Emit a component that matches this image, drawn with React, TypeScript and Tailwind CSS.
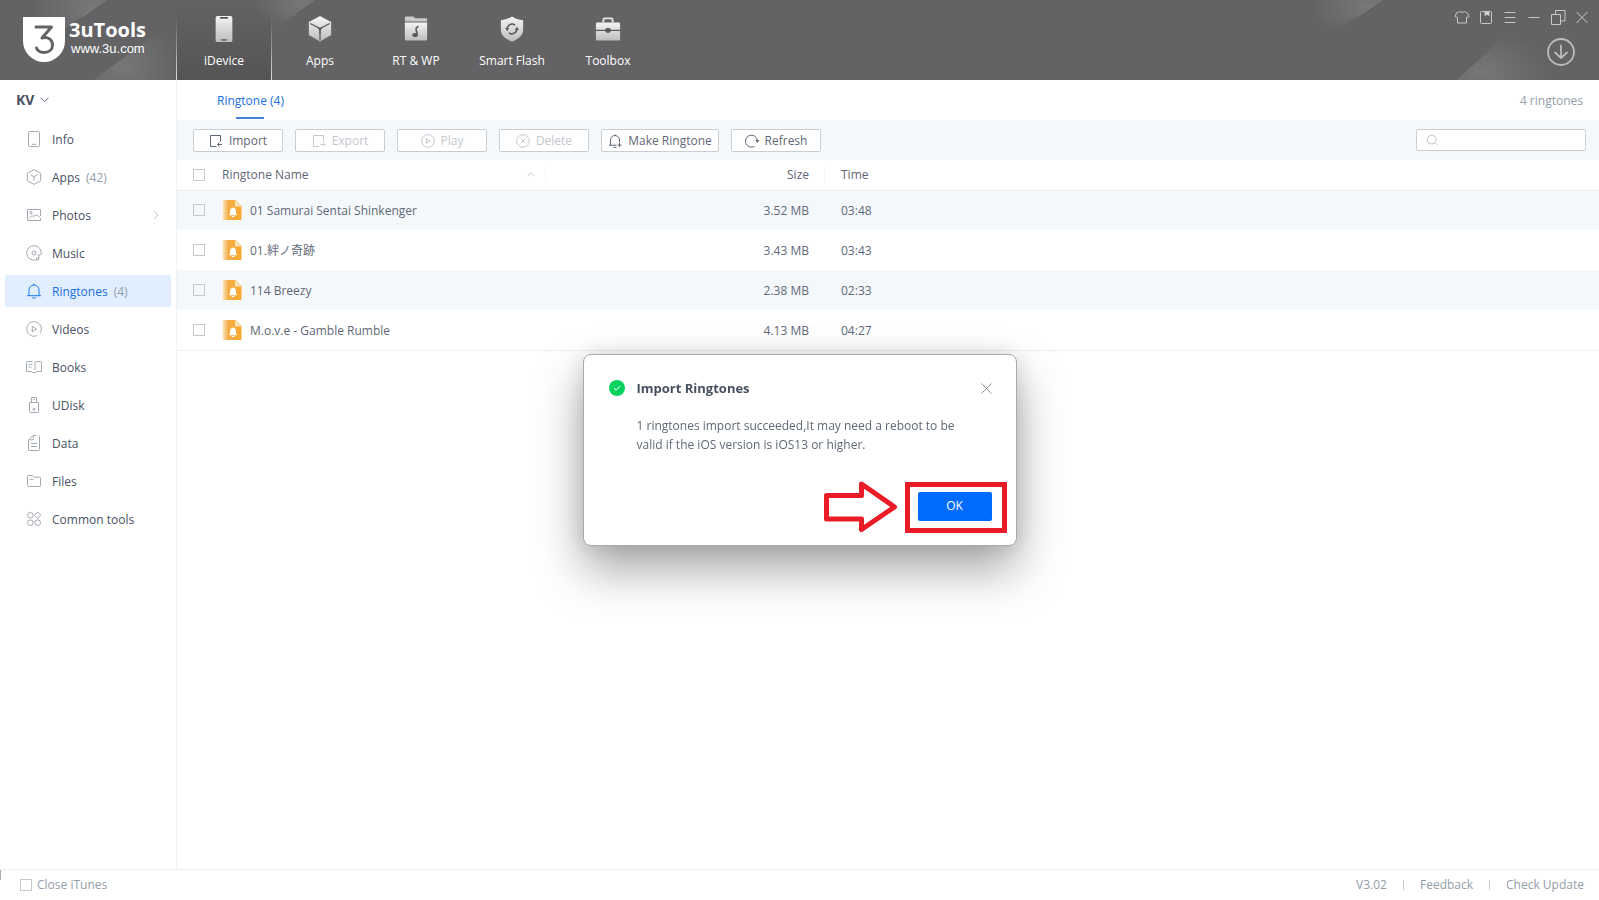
import { useState, type ReactNode } from 'react';
import clsx from 'clsx';

type IconProps = { className?: string };

const navTabs = [
  { label: 'iDevice', icon: DeviceIcon },
  { label: 'Apps', icon: CubeIcon },
  { label: 'RT & WP', icon: MusicFolderIcon },
  { label: 'Smart Flash', icon: ShieldIcon },
  { label: 'Toolbox', icon: ToolboxIcon },
];

const sideItems = [
  { label: 'Info', icon: 'info' },
  { label: 'Apps', icon: 'apps', count: 42 },
  { label: 'Photos', icon: 'photos', more: true },
  { label: 'Music', icon: 'music' },
  { label: 'Ringtones', icon: 'bell', count: 4 },
  { label: 'Videos', icon: 'videos' },
  { label: 'Books', icon: 'books' },
  { label: 'UDisk', icon: 'udisk' },
  { label: 'Data', icon: 'data' },
  { label: 'Files', icon: 'files' },
  { label: 'Common tools', icon: 'tools' },
];

const ringtones = [
  { name: '01 Samurai Sentai Shinkenger', size: '3.52 MB', time: '03:48' },
  { name: '01.絆ノ奇跡', size: '3.43 MB', time: '03:43' },
  { name: '114 Breezy', size: '2.38 MB', time: '02:33' },
  { name: 'M.o.v.e - Gamble Rumble', size: '4.13 MB', time: '04:27' },
];

// 16x16 line icons for the sidebar
const sideIcons: Record<string, ReactNode> = {
  info: (
    <>
      <rect x="2.5" y=".5" width="11" height="15" rx="1.2" />
      <path d="M6 13.3h4" />
    </>
  ),
  apps: (
    <>
      <path d="M8 .6l6.7 3.7v7.4L8 15.4l-6.7-3.7V4.300z" />
      <path d="M4.500 5.800L8 7.700l3.500-1.900M8 7.700v4" />
    </>
  ),
  photos: (
    <>
      <path d="M14.500 9V2.500h-13v11h13V11" />
      <circle cx="5" cy="5.700" r="1.200" />
      <path d="M3 11.500c2-3 4-3 5.500-1.500M8 8.500c2-1.200 4-.5 5.500 2" />
    </>
  ),
  music: (
    <>
      <path d="M9.800 15A7.300 7.300 0 1 1 15 10" />
      <circle cx="8" cy="8" r="2" />
      <circle cx="11.500" cy="14" r="1.300" />
      <path d="M12.800 14V9.500l1.500 1.500" />
    </>
  ),
  bell: (
    <>
      <path d="M3 12.500V7a5 5 0 0 1 10 0v5.500M1 12.700h14M6.300 14.900h3.400M8 2V.6" />
    </>
  ),
  videos: (
    <>
      <path d="M11.500 14.400A7.300 7.300 0 1 1 14 12.200" />
      <path d="M6.300 5.300v5.400L10.500 8z" />
    </>
  ),
  books: (
    <>
      <path d="M6.500 2.500h-5a1 1 0 0 0-1 1v9h5l1 1h3l1-1h5v-9a1 1 0 0 0-1-1h-4a1.500 1.500 0 0 0-1.500 1.500v7M2.500 5.300h4M2.500 8h3" />
    </>
  ),
  udisk: (
    <>
      <path d="M5.500 5V.5h5V5M3.500 5.500h9v9a1 1 0 0 1-1 1h-7a1 1 0 0 1-1-1zM7.200 2.500h1.600" />
      <circle cx="8" cy="12.300" r="1" />
    </>
  ),
  data: (
    <>
      <path d="M10 .5H7L2.500 5v9.500a1 1 0 0 0 1 1h9a1 1 0 0 0 1-1v-13a1 1 0 0 0-1-1M7.300 1v3.800H3M5 8.500h6M5 11.500h6" />
    </>
  ),
  files: (
    <>
      <path d="M14.500 8v4.500a1 1 0 0 1-1 1h-11a1 1 0 0 1-1-1v-9a1 1 0 0 1 1-1h4l1.500 1.700h5.500a1 1 0 0 1 1 1V8M3.500 6.300h4" />
    </>
  ),
  tools: (
    <>
      <circle cx="4.300" cy="4.300" r="2.800" />
      <path d="M11.700 1l3.200 3.300-3.200 3.200-3.200-3.200z" />
      <circle cx="4.300" cy="11.700" r="2.800" />
      <circle cx="11.700" cy="11.700" r="2.800" />
    </>
  ),
};

const toolIcons: Record<string, ReactNode> = {
  import: <path d="M7.500 12.500h-6v-11h10v6M13 10.500H8.500m2-2l-2 2 2 2" />,
  export: <path d="M7.500 12.500h-6v-11h10v6M8.500 10.500H13m-2-2l2 2-2 2" />,
  play: (
    <>
      <circle cx="7" cy="7" r="6.300" />
      <path d="M5.500 4.800v4.400L9 7z" />
    </>
  ),
  delete: (
    <>
      <circle cx="7" cy="7" r="6.300" />
      <path d="M4.800 4.800l4.400 4.400m0-4.400L4.800 9.200" />
    </>
  ),
  ring: <path d="M2.500 11V6a4.500 4.500 0 0 1 9 0v2.500M1 11.200h7.500M5.500 13.300h3M7 1.500V.3M9.500 11h4m-2-2v4" />,
  refresh: (
    <>
      <path d="M9.500 12.300A6 6 0 1 1 12.300 6" />
      <path d="M10.300 6h4l-2 3z" fill="currentColor" stroke="none" />
    </>
  ),
};

export default function App() {
  const [dialogOpen, setDialogOpen] = useState(true);

  return (
    <div className="flex h-screen flex-col bg-white font-['Open_Sans','Noto_Sans_CJK_JP',sans-serif] text-xs text-[#5f6878]">
      <Header />
      <div className="flex min-h-0 flex-1">
        <Sidebar />
        <main className="min-w-0 flex-1">
          <div className="flex h-10 items-stretch justify-between pr-4 pl-10">
            <button className="relative pt-0.5 text-[#1b6fe0]">
              Ringtone (4)
              <span className="absolute bottom-px left-1/2 h-0.5 w-7 -translate-x-1/2 bg-[#3f82cf]" />
            </button>
            <span className="self-center pt-0.5 text-[#939daa]">4 ringtones</span>
          </div>
          <Toolbar />
          <RingtoneTable />
        </main>
      </div>
      <StatusBar />
      {dialogOpen && <ImportDialog onClose={() => setDialogOpen(false)} />}
    </div>
  );
}

function Header() {
  return (
    <header className="relative flex h-20 shrink-0 bg-[#636365] text-white">
      {/* diagonal light streaks */}
      <svg className="absolute top-0 left-0" width="400" height="80" aria-hidden="true">
        <defs>
          <radialGradient id="glow">
            <stop offset="0" stopColor="#fff" stopOpacity=".13" />
            <stop offset="1" stopColor="#fff" stopOpacity="0" />
          </radialGradient>
          <clipPath id="cutA">
            <path d="M0 0H106L0 75z" />
          </clipPath>
          <clipPath id="cutB">
            <path d="M93 80L203 0V80z" />
          </clipPath>
          <clipPath id="cutC">
            <path d="M180 0H314L204 80H180z" />
          </clipPath>
        </defs>
        <ellipse cx="92" cy="8" rx="62" ry="40" fill="url(#glow)" clipPath="url(#cutA)" />
        <path d="M106 0L82 17" stroke="#858587" strokeWidth=".8" />
        <ellipse cx="122" cy="66" rx="56" ry="46" fill="url(#glow)" clipPath="url(#cutB)" />
        <ellipse cx="302" cy="4" rx="50" ry="26" fill="url(#glow)" clipPath="url(#cutC)" />
        <path d="M314 0L292 16" stroke="#7c7c7e" strokeWidth=".8" />
      </svg>
      <svg className="absolute top-0 right-0" width="300" height="80" aria-hidden="true">
        <defs>
          <clipPath id="cutD">
            <path d="M0 0H83L0 56z" />
          </clipPath>
          <clipPath id="cutE">
            <path d="M158 80L240 4H300V80z" />
          </clipPath>
        </defs>
        <ellipse cx="68" cy="6" rx="56" ry="32" fill="url(#glow)" clipPath="url(#cutD)" />
        <path d="M83 0L58 17" stroke="#858587" strokeWidth=".8" />
        <ellipse cx="182" cy="72" rx="68" ry="40" fill="url(#glow)" clipPath="url(#cutE)" />
      </svg>

      <div className="relative flex w-44 shrink-0 items-start pt-4 pl-[23px]">
        <svg width="42" height="46" viewBox="0 0 42 46" aria-hidden="true">
          <path d="M0 1h42v24a21 21 0 0 1-42 0z" fill="#fff" />
          <path
            d="M13 11h15.500L19 22c6-1.500 10.500 1.500 10.500 7 0 4.500-3.500 7.500-8.500 7.500-4 0-6.500-2-7.500-4.500"
            fill="none"
            stroke="#636365"
            strokeWidth="3"
            strokeLinecap="round"
            strokeLinejoin="round"
          />
        </svg>
        <div className="pt-1 pl-1">
          <p className="text-xl leading-5 font-bold">3uTools</p>
          <p className="pl-0.5 font-['Liberation_Sans',sans-serif] text-[13px] leading-[18px]">www.3u.com</p>
        </div>
      </div>

      <nav className="relative flex">
        {navTabs.map(({ label, icon: Icon }, i) => (
          <button
            key={label}
            className={clsx(
              'relative flex w-24 flex-col items-center pt-4',
              i === 0 && 'bg-linear-to-b from-transparent to-black/15',
            )}
          >
            {i === 0 && (
              <>
                <span className="absolute bottom-0 left-0 h-16 w-px bg-linear-to-b from-transparent to-white/80" />
                <span className="absolute right-0 bottom-0 h-16 w-px bg-linear-to-b from-transparent to-white/80" />
              </>
            )}
            <Icon className="size-[26px]" />
            <span className="mt-2.5 leading-[18px]">{label}</span>
          </button>
        ))}
      </nav>

      <div className="relative ml-auto flex flex-col items-end pt-[9px] pr-[9px]">
        <div className="flex gap-2">
          <WindowButton label="Skin">
            <path d="M5.500 2.500c1 1 4 1 5 0l3 1.500 1.500 3.500-2.500 1v5.500h-9V8.500L1 7.500 2.500 4z" />
          </WindowButton>
          <WindowButton label="Notes">
            <rect x="2.500" y="2.500" width="11" height="12" rx="1" />
            <path d="M7 2.500h4v4l-2-1.200-2 1.200z" fill="#d6d6d6" />
          </WindowButton>
          <WindowButton label="Menu">
            <path d="M2.500 3.500h11M2.500 8.500h11M2.500 13.500h11" />
          </WindowButton>
          <WindowButton label="Minimize">
            <path d="M2.500 8.500h11" />
          </WindowButton>
          <WindowButton label="Restore">
            <path d="M1.500 5.500h9v10h-9zM5.500 5V1.500h9.500v10.500h-4" />
          </WindowButton>
          <WindowButton label="Close">
            <path d="M2.500 3l11 11m0-11l-11 11" />
          </WindowButton>
        </div>
        <button aria-label="Downloads" className="mt-[13px] mr-[15px]">
          <svg width="28" height="28" viewBox="0 0 28 28" fill="none" stroke="#bcbcbd" strokeWidth="1.800" strokeLinecap="round" strokeLinejoin="round">
            <circle cx="14" cy="14" r="13" />
            <path d="M14 7.500V20M8 14.500l6 5.500 6-5.500" />
          </svg>
        </button>
      </div>
    </header>
  );
}

function WindowButton({ label, children }: { label: string; children: ReactNode }) {
  return (
    <button aria-label={label}>
      <svg width="16" height="16" viewBox="0 0 16 16" fill="none" stroke="#c8c8c9">
        {children}
      </svg>
    </button>
  );
}

function Sidebar() {
  const [active, setActive] = useState('Ringtones');

  return (
    <aside className="w-[177px] shrink-0 border-r border-[#f0f2f4]">
      <button className="flex h-[39px] items-center gap-1.5 pl-4 text-sm font-bold text-[#465060]">
        KV
        <svg width="9" height="6" viewBox="0 0 9 6" fill="none" stroke="#5f6878">
          <path d="M.5.7l4 4 4-4" />
        </svg>
      </button>
      <ul className="flex flex-col gap-1.5 px-[5px] pt-1">
        {sideItems.map(({ label, icon, count, more }) => {
          const isActive = label === active;
          return (
            <li key={label}>
              <button
                onClick={() => setActive(label)}
                className={clsx(
                  'flex h-8 w-full items-center rounded-xs pr-3 pl-[21px]',
                  isActive ? 'bg-[#e1eefd] text-[#1b6fe0]' : 'text-[#485264]',
                )}
              >
                <svg width="16" height="16" viewBox="0 0 16 16" fill="none" stroke={isActive ? '#1b78f0' : '#a3a9b1'}>
                  {sideIcons[icon]}
                </svg>
                <span className="pt-px pl-2.5">{label}</span>
                {count && <span className="pt-px pl-1.5 text-[#939daa]">({count})</span>}
                {more && (
                  <svg className="ml-auto" width="6" height="10" viewBox="0 0 6 10" fill="none" stroke="#c0c5cb">
                    <path d="M1 1l4 4-4 4" />
                  </svg>
                )}
              </button>
            </li>
          );
        })}
      </ul>
    </aside>
  );
}

function Toolbar() {
  return (
    <div className="flex h-10 items-center gap-3 bg-[#f4f8fb] pr-[13px] pl-4">
      <ToolButton icon="import" label="Import" />
      <ToolButton icon="export" label="Export" disabled />
      <ToolButton icon="play" label="Play" disabled />
      <ToolButton icon="delete" label="Delete" disabled />
      <ToolButton icon="ring" label="Make Ringtone" wide />
      <ToolButton icon="refresh" label="Refresh" />
      <label className="ml-auto flex h-[22px] w-[170px] items-center gap-2 rounded-xs border border-[#c9ced3] bg-white pl-2.5">
        <svg width="12" height="12" viewBox="0 0 12 12" fill="none" stroke="#b4bac1">
          <circle cx="5.500" cy="5.500" r="5" />
          <path d="M9 9l2.500 2.500" />
        </svg>
        <input type="text" aria-label="Search ringtones" className="w-full min-w-0 outline-none" />
      </label>
    </div>
  );
}

function ToolButton({ icon, label, disabled, wide }: { icon: string; label: string; disabled?: boolean; wide?: boolean }) {
  return (
    <button
      disabled={disabled}
      className={clsx(
        'flex h-[23px] items-center justify-center gap-1.5 rounded-xs border border-[#c9ced3] bg-white pt-px whitespace-nowrap',
        wide ? 'w-[118px]' : 'w-[90px]',
        disabled ? 'text-[#c3c8ce]' : 'text-[#5f6878]',
      )}
    >
      <svg className="shrink-0" width="14" height="14" viewBox="0 0 14 14" fill="none" stroke="currentColor">
        {toolIcons[icon]}
      </svg>
      {label}
    </button>
  );
}

function Checkbox({ label, id }: { label?: string; id?: string }) {
  return (
    <input
      id={id}
      type="checkbox"
      aria-label={label}
      className="block size-3 appearance-none border border-[#c3c9cf] checked:bg-[#1b78f0]"
    />
  );
}

function RingtoneTable() {
  return (
    <table className="w-full table-fixed border-b border-[#eef1f3] text-left">
      <colgroup>
        <col className="w-[45px]" />
        <col className="w-[324px]" />
        <col className="w-[279px]" />
        <col />
      </colgroup>
      <thead>
        <tr className="h-[30px] border-b border-[#e9edf0]">
          <th className="pl-4">
            <Checkbox label="Select all" />
          </th>
          <th className="font-normal">
            <div className="flex h-4 items-center justify-between border-r border-[#f3f5f7] pr-2.5">
              Ringtone Name
              <svg width="8" height="5" viewBox="0 0 8 5" fill="none" stroke="#c3c9cf">
                <path d="M.5 4.300L4 .8l3.500 3.500" />
              </svg>
            </div>
          </th>
          <th className="text-right font-normal">
            <div className="h-4 border-r border-[#f3f5f7] pr-[15px]">Size</div>
          </th>
          <th className="pl-4 font-normal">Time</th>
        </tr>
      </thead>
      <tbody>
        {ringtones.map((tone) => (
          <tr key={tone.name} className="h-10 odd:bg-[#f4f8fb]">
            <td className="pl-4">
              <Checkbox label={tone.name} />
            </td>
            <td>
              <div className="flex items-center gap-2">
                <RingtoneFileIcon />
                <span className="pt-0.5">{tone.name}</span>
              </div>
            </td>
            <td className="pt-0.5 pr-4 text-right">{tone.size}</td>
            <td className="pt-0.5 pl-4">{tone.time}</td>
          </tr>
        ))}
      </tbody>
    </table>
  );
}

function StatusBar() {
  return (
    <footer className="flex h-[31px] shrink-0 items-center border-t border-[#edf0f2] pr-[15px] text-[#939daa]">
      <span className="h-2.5 w-px self-start bg-[#a9adb1]" />
      <div className="flex items-center gap-[5px] pl-[19px]">
        <Checkbox id="close-itunes" />
        <label htmlFor="close-itunes">Close iTunes</label>
      </div>
      <div className="ml-auto flex items-center">
        <span>V3.02</span>
        <span className="mx-4 h-2.5 w-px bg-[#c3c9cf]" />
        <a href="#feedback">Feedback</a>
        <span className="mx-4 h-2.5 w-px bg-[#c3c9cf]" />
        <a href="#update">Check Update</a>
      </div>
    </footer>
  );
}

function ImportDialog({ onClose }: { onClose: () => void }) {
  return (
    <div className="fixed inset-0 flex items-center justify-center">
      <div
        role="dialog"
        aria-labelledby="import-title"
        className="flex h-48 w-[434px] flex-col rounded-lg border border-[#a9a9a9] bg-white pr-[9px] pl-[25px] shadow-[0_24px_48px_rgba(0,0,0,0.35),0_0_24px_rgba(0,0,0,0.12)]"
      >
        <div className="flex items-center pt-[23px] pr-[15px]">
          <svg width="16" height="16" viewBox="0 0 16 16" fill="none">
            <circle cx="8" cy="8" r="8" fill="#0ad15f" />
            <path d="M5 8l2.200 2.200L11 6" stroke="#fff" />
          </svg>
          <h2 id="import-title" className="pl-3 text-[13px] leading-5 font-bold text-[#465060]">
            Import Ringtones
          </h2>
          <button aria-label="Close dialog" onClick={onClose} className="ml-auto">
            <svg width="11" height="11" viewBox="0 0 11 11" fill="none" stroke="#8f959d">
              <path d="M.5.5l10 10m0-10l-10 10" />
            </svg>
          </button>
        </div>
        <p className="w-[352px] pt-[18px] pl-7 leading-[19px]">
          1 ringtones import succeeded,It may need a reboot to be valid if the iOS version is iOS13 or higher.
        </p>
        <div className="mt-auto mb-3 flex items-center justify-end gap-[7px]">
          <svg width="74" height="52" viewBox="0 0 74 52" fill="none" stroke="#ea1c27" strokeWidth="5" strokeLinejoin="round" aria-hidden="true">
            <path d="M2.500 14.500H37.500V3L70.500 26 37.500 48.500V38H2.500z" />
          </svg>
          <div className="border-[5px] border-[#ea1c27] pt-[5px] pr-[10px] pb-[7px] pl-2">
            <button onClick={onClose} className="block h-[29px] w-[74px] rounded-xs bg-[#006cff] text-white">
              OK
            </button>
          </div>
        </div>
      </div>
    </div>
  );
}

function RingtoneFileIcon() {
  return (
    <svg width="20" height="22" viewBox="0 0 20 22" className="shrink-0" aria-hidden="true">
      <defs>
        <linearGradient id="fileFill" x1="0" x2="1">
          <stop offset="0" stopColor="#fde9c8" />
          <stop offset=".3" stopColor="#f3ae45" />
          <stop offset="1" stopColor="#f9a92f" />
        </linearGradient>
      </defs>
      <path d="M.5 1h13l6 6v14H.5z" fill="url(#fileFill)" />
      <path d="M13 1l6.500 6.500H13z" fill="#fde3b8" />
      <path d="M11 8.500c-2 .3-3 1.900-3 3.800v2.200l-1.300 1.800h8.600L14 14.500v-2.200c0-1.900-1-3.500-3-3.800zM9.800 17h2.400v1H9.800z" fill="#fff" />
    </svg>
  );
}

function MetalFill({ id }: { id: string }) {
  return (
    <defs>
      <linearGradient id={id} x1="0" x2="0" y1="0" y2="1">
        <stop offset="0" stopColor="#f4f4f4" />
        <stop offset="1" stopColor="#bdbdbe" />
      </linearGradient>
    </defs>
  );
}

function DeviceIcon({ className }: IconProps) {
  return (
    <svg className={className} viewBox="0 0 28 28">
      <MetalFill id="metalDevice" />
      <rect x="5" y="0" width="18" height="28" rx="2" fill="url(#metalDevice)" />
      <path d="M9.500 1h9v1a1 1 0 0 1-1 1h-7a1 1 0 0 1-1-1z" fill="#59595b" />
      <path d="M11 25.800h6" stroke="#59595b" strokeWidth="1.500" />
    </svg>
  );
}

function CubeIcon({ className }: IconProps) {
  return (
    <svg className={className} viewBox="0 0 28 28">
      <MetalFill id="metalCube" />
      <path d="M14 0l12 6.500v14L14 27.500 2 20.500v-14z" fill="url(#metalCube)" />
      <path d="M3.500 8L14 13.500 24.500 8M14 13.500V26.500" fill="none" stroke="#59595b" strokeWidth="1.300" />
      <path d="M10.500 11.500L14 13l3.500-1.500L14.800 15v4h-1.600v-4z" fill="#59595b" />
    </svg>
  );
}

function MusicFolderIcon({ className }: IconProps) {
  return (
    <svg className={className} viewBox="0 0 28 28">
      <MetalFill id="metalFolder" />
      <path d="M2 6V2A1.500 1.500 0 0 1 3.500.5h8L13 2.500h12a1 1 0 0 1 1 1V6z" fill="#c9c9ca" />
      <path d="M2 7h24v18a1.500 1.500 0 0 1-1.500 1.500h-21A1.500 1.500 0 0 1 2 25z" fill="url(#metalFolder)" />
      <ellipse cx="13" cy="20.500" rx="3" ry="2.300" fill="#59595b" />
      <path d="M15.200 20.500c.5-3-2-5-.9-7.500.5-1 1.500-1 2.200-2" fill="none" stroke="#59595b" strokeWidth="1.800" />
    </svg>
  );
}

function ShieldIcon({ className }: IconProps) {
  return (
    <svg className={className} viewBox="0 0 28 28">
      <MetalFill id="metalShield" />
      <path d="M14 .5c3.500 2.300 7.500 3.500 12 4v10.500c0 6-5.500 10-12 12.500C7.500 25 2 21 2 15V4.500c4.500-.5 8.500-1.700 12-4z" fill="url(#metalShield)" />
      <path d="M8.800 15.500a5.400 5.400 0 0 1 8.500-5.600M19.200 12.500a5.400 5.400 0 0 1-8.500 5.600" fill="none" stroke="#59595b" strokeWidth="1.600" />
      <path d="M11.200 12.800H6.600L8.900 16zM21.500 15.200h-4.600l2.300-3.200z" fill="#59595b" />
    </svg>
  );
}

function ToolboxIcon({ className }: IconProps) {
  return (
    <svg className={className} viewBox="0 0 28 28">
      <MetalFill id="metalToolbox" />
      <path d="M9 7V4a1.500 1.500 0 0 1 1.500-1.500h7A1.500 1.500 0 0 1 19 4v3" fill="none" stroke="#e6e6e6" strokeWidth="2" />
      <path d="M2.500 7h23A1.500 1.500 0 0 1 27 8.500v16.500a1.500 1.500 0 0 1-1.500 1.500h-23A1.500 1.500 0 0 1 1 25V8.500A1.500 1.500 0 0 1 2.500 7z" fill="url(#metalToolbox)" />
      <path d="M1 15.500h26" stroke="#59595b" strokeWidth="1.300" />
      <rect x="11" y="13" width="6" height="5" rx="2" fill="#59595b" />
    </svg>
  );
}
